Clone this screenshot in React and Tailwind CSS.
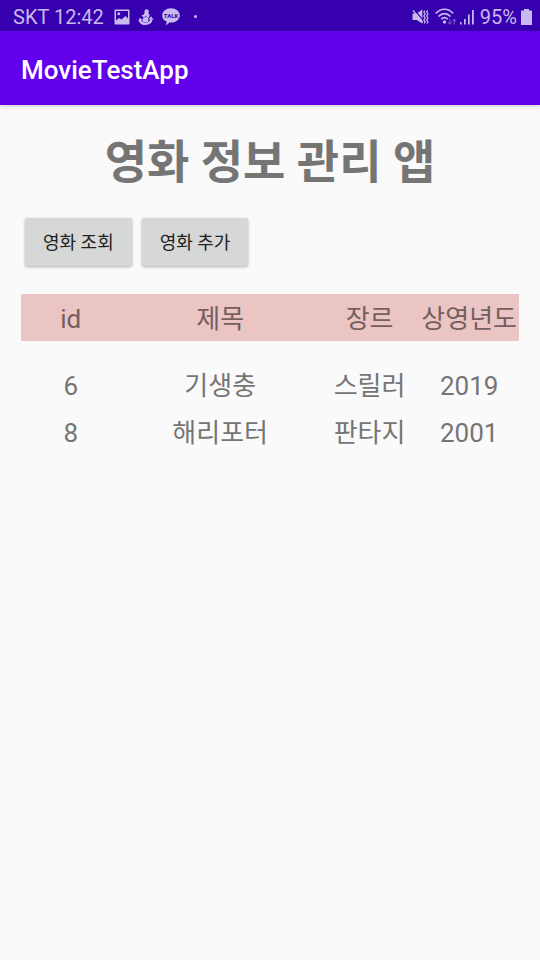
const movies = [
  { id: 6, title: '기생충', genre: '스릴러', year: 2019 },
  { id: 8, title: '해리포터', genre: '판타지', year: 2001 },
];

function PictureIcon() {
  return (
    <svg className="h-4 w-4" viewBox="0 0 16 16" fill="currentColor" aria-hidden="true">
      <path fillRule="evenodd" d="M1.5 0.5h13a1 1 0 0 1 1 1v13a1 1 0 0 1-1 1h-13a1 1 0 0 1-1-1v-13a1 1 0 0 1 1-1zM2 2v9.500l3-2.500 2.500 1.600L11.500 7 14 9.500V2z" />
      <circle cx="4.800" cy="4.800" r="1.500" />
    </svg>
  );
}

function MascotIcon() {
  return (
    <svg className="h-4 w-4" viewBox="0 0 16 16" fill="currentColor" aria-hidden="true">
      <circle cx="8.600" cy="2.400" r="2.200" />
      <path d="M6.400 4L9.700 3.800c1.700.8 2.200 2.200 1.600 3.800L10 9.600c.8 1.200.6 2.800-.4 3.700l-4.800-.3c-.8-1.700-.2-3.300 1-4.400L4.600 7.800 3.600 6.200l2.200-.6z" />
      <path d="M1.800 11c.5 2.600 2.300 3.700 5.200 3.700 3.700 0 6-1 6.300-4.200" fill="none" stroke="currentColor" strokeWidth="2.400" />
      <path d="M.3 11.800l1.600-3 2.700 2.400zM10.600 10.600l2.400-3.400 2.600 3.600z" />
      <path d="M6.500 8.300l2.300-1.200" stroke="#3700ae" strokeWidth="0.800" />
    </svg>
  );
}

function TalkIcon() {
  return (
    <svg className="h-[18px] w-[18px]" viewBox="0 0 18 18" fill="currentColor" aria-hidden="true">
      <path d="M9 0.300c4.900 0 8.800 3.200 8.800 7.100s-3.900 7.100-8.800 7.100l-1.500-.1L4 17.500l.7-3.900C2 12.500.2 10.200.2 7.400.2 3.500 4.100.3 9 .3z" />
      <text x="9" y="9.600" textAnchor="middle" fontFamily="Roboto, sans-serif" fontSize="6" fontWeight="700" fill="#3700ae">TALK</text>
    </svg>
  );
}

function MuteIcon() {
  return (
    <svg className="h-[18px] w-[17px]" viewBox="0 0 17 18" fill="currentColor" aria-hidden="true">
      <path d="M.5 5.500h4.200L10.300 1.500v14L4.700 12H.5z" />
      <path d="M2.500 1.800l8.500 10.400" stroke="#3700ae" strokeWidth="1.200" />
      <path d="M1 2.400l9.700 12.100" stroke="currentColor" strokeWidth="1.400" />
      <path d="M12.800 2.500l-.9 1.600 1.200 1.900-1.200 2 1.200 2-1.200 2 1.200 2-.8 1.400M15.600 2.500l-.9 1.600 1.200 1.900-1.200 2 1.200 2-1.200 2 1.200 2-.8 1.400" fill="none" stroke="currentColor" strokeWidth="1.300" />
    </svg>
  );
}

function WifiIcon() {
  return (
    <svg className="h-[18px] w-[22px]" viewBox="0 0 22 18" fill="none" stroke="currentColor" aria-hidden="true">
      <g strokeWidth="1.600">
        <path d="M.8 5.500C6-.1 13-.1 18.200 5.500" />
        <path d="M3.500 8.500c3.500-3.800 8.500-3.800 12 0" />
        <path d="M6.200 11.300c2-2.200 4.600-2.200 6.600 0" />
      </g>
      <circle cx="9.500" cy="14" r="1.700" fill="currentColor" stroke="none" />
      <path d="M14.800 11v5.200m-1.800-1.800l1.800 1.800 1.800-1.800M19.200 16.500v-5.200m-1.800 1.800l1.800-1.800 1.800 1.800" strokeWidth="1.200" opacity="0.400" />
    </svg>
  );
}

function SignalIcon() {
  return (
    <svg className="h-4 w-[14px]" viewBox="0 0 14 16" fill="currentColor" aria-hidden="true">
      <path d="M0 13h1.500v2.500H0zM4 10h1.700v5.500H4zM8 5.500h1.700v10H8zM12 1h1.800v14.500H12z" />
    </svg>
  );
}

function BatteryIcon() {
  return (
    <svg className="h-4 w-[11px]" viewBox="0 0 11 16" fill="currentColor" aria-hidden="true">
      <path d="M3 0h5v1.500h2.500a.5.500 0 0 1 .5.500v13.500a.5.500 0 0 1-.5.500H.5a.5.500 0 0 1-.5-.5V2a.5.500 0 0 1 .5-.5H3z" />
    </svg>
  );
}

function StatusBar() {
  return (
    <div className="flex h-[31px] items-center justify-between bg-[#3700ae] pt-0.5 pr-2 pl-[13px] text-xl leading-6 text-[#c8b9ee]">
      <div className="flex items-center">
        <span>SKT 12:42</span>
        <div className="ml-2.5 flex items-center gap-2">
          <PictureIcon />
          <MascotIcon />
          <TalkIcon />
        </div>
        <span className="ml-3.5 h-[3px] w-[3px] rounded-full bg-current" />
      </div>
      <div className="flex items-center gap-1">
        <MuteIcon />
        <div className="flex items-center gap-[3px] pl-0.5">
          <WifiIcon />
          <SignalIcon />
        </div>
        <span className="pl-0.5">95%</span>
        <BatteryIcon />
      </div>
    </div>
  );
}

function ActionButton({ children }) {
  return (
    <button
      type="button"
      className="h-12 rounded-xs bg-[#d6d7d7] px-[18px] pt-0.5 text-lg leading-6 text-[#212121] shadow-[0_1px_3px_rgba(0,0,0,0.3)]"
    >
      {children}
    </button>
  );
}

export default function App() {
  return (
    <div className="min-h-screen bg-[#fafafa] font-[Roboto,'Noto_Sans_CJK_KR',sans-serif] text-[#757575]">
      <StatusBar />
      <header className="flex h-[74px] items-center bg-[#6200ee] px-[21px] pt-1 text-white shadow-[0_1px_4px_rgba(0,0,0,0.2)]">
        <h1 className="text-[26px] leading-8 font-medium">MovieTestApp</h1>
      </header>
      <main className="px-[21px] pt-[23px]">
        <h2 className="text-center text-[46px] leading-[68px] font-bold">영화 정보 관리 앱</h2>
        <div className="flex gap-2.5 px-1 pt-[22px]">
          <ActionButton>영화 조회</ActionButton>
          <ActionButton>영화 추가</ActionButton>
        </div>
        <table className="mt-7 w-full table-fixed text-center text-[26px] leading-[43px]">
          <thead>
            <tr className="bg-[#ebc4c4] text-[#755e5e]">
              <th scope="col" className="w-1/5 p-0 pt-1 font-normal">id</th>
              <th scope="col" className="w-2/5 p-0 pt-1 font-normal">제목</th>
              <th scope="col" className="w-1/5 p-0 pt-1 font-normal">장르</th>
              <th scope="col" className="w-1/5 p-0 pt-1 font-normal whitespace-nowrap">상영년도</th>
            </tr>
          </thead>
          <tbody className="before:block before:h-5">
            {movies.map((movie) => (
              <tr key={movie.id}>
                <td className="p-0 pt-1">{movie.id}</td>
                <td className="p-0 pt-1">{movie.title}</td>
                <td className="p-0 pt-1">{movie.genre}</td>
                <td className="p-0 pt-1">{movie.year}</td>
              </tr>
            ))}
          </tbody>
        </table>
      </main>
    </div>
  );
}
